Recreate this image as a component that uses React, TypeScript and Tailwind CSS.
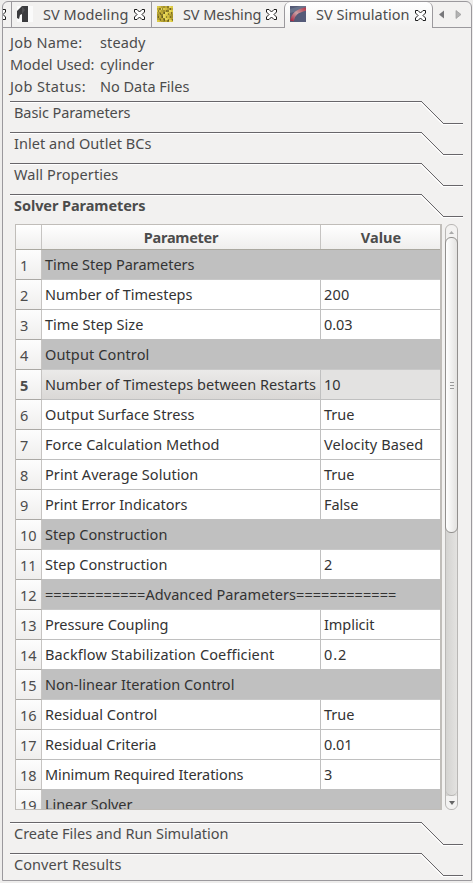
import { useLayoutEffect, useRef, useState } from "react";

type FitProps = { text: string; w: number; className?: string };

// Spreads the letters of a label over a fixed advance width.
function Fit({ text, w, className = "" }: FitProps) {
  const ref = useRef<HTMLSpanElement>(null);
  const [spacing, setSpacing] = useState(0);
  useLayoutEffect(() => {
    const el = ref.current;
    if (!el) return;
    el.style.letterSpacing = "0px";
    const next = (w - 0.6 - el.getBoundingClientRect().width) / text.length;
    el.style.letterSpacing = `${next}px`;
    setSpacing(next);
  }, [text, w]);
  return (
    <span ref={ref} className={`inline-block whitespace-pre ${className}`} style={{ letterSpacing: spacing }}>
      {text}
    </span>
  );
}

function CloseIcon() {
  return (
    <svg width="11" height="11" viewBox="0 0 11 11" className="shrink-0">
      <path
        d="M.5 .5H3L5.5 3L8 .5H10.5V3L8 5.5L10.5 8V10.5H8L5.5 8L3 10.5H.5V8L3 5.5L.5 3Z"
        fill="#fff"
        stroke="#1c1c1c"
      />
    </svg>
  );
}

function ModelIcon() {
  return (
    <svg width="16" height="16" viewBox="0 0 16 16" className="shrink-0">
      <rect width="16" height="16" fill="#fafafa" />
      <path d="M5 0H11V16H5V8L3 9L2 13L0 12V5Z" fill="#3b3b3e" />
      <path d="M5 0L8 4L5 8" fill="#505053" />
    </svg>
  );
}

function MeshIcon() {
  const cells = Array.from({ length: 64 }, (_, i) => i);
  const tones = ["#dccb45", "#a3912c", "#e8d75c", "#b6a334", "#8b7c28", "#d1bb3e", "#c0aa36"];
  return (
    <svg width="16" height="16" viewBox="0 0 16 16" className="shrink-0">
      <rect width="16" height="16" fill="#b9a638" />
      {cells.map((i) => (
        <rect key={i} x={(i % 8) * 2} y={Math.floor(i / 8) * 2} width="2" height="2" fill={tones[(i * 5 + (i >> 3) * (i >> 3)) % 7]} />
      ))}
      <path
        d="M1 5h1M5 3h1M9 5h1M13 3h1M3 8h1M7 7h1M11 8h1M14 7h1M1 11h1M5 11h1M9 11h1M13 11h1M3 14h1M7 14h1M11 14h1M15 14h1"
        stroke="#453f17"
        strokeWidth="1"
      />
    </svg>
  );
}

function SimulationIcon() {
  return (
    <svg width="16" height="16" viewBox="0 0 16 16" className="shrink-0">
      <defs>
        <linearGradient id="vessel" x1="0" y1="1" x2="1" y2="0">
          <stop offset="0" stopColor="#a82a44" />
          <stop offset=".5" stopColor="#c9a0a4" />
          <stop offset="1" stopColor="#b83c4e" />
        </linearGradient>
      </defs>
      <rect width="16" height="16" fill="#555a76" />
      <path d="M0 3L10 0H16V2L8 5L0 7Z" fill="#68738b" />
      <path d="M2 15C3 8 7 5 16 3" stroke="url(#vessel)" strokeWidth="3.5" fill="none" />
      <path d="M8 16V9L16 5V16Z" fill="#555b79" />
    </svg>
  );
}

function TabBar() {
  return (
    <div className="flex h-[26px] w-full text-[#4c4c4c]">
      <div className="flex h-[26px] w-[8px] items-center overflow-hidden border-b border-[#9b999d]">
        <div className="-ml-[8px] flex">
          <CloseIcon />
        </div>
      </div>
      <div className="flex h-[26px] w-[140px] items-center border-b border-l border-[#9b999d] pl-[5px]">
        <div className="-mt-[2px]"><ModelIcon /></div>
        <Fit text="SV Modeling" w={86} className="ml-[10px]" />
        <div className="ml-[6px]"><CloseIcon /></div>
      </div>
      <div className="flex h-[26px] w-[133px] items-center border-b border-l border-[#9b999d] pl-[5px]">
        <div className="-mt-[2px]"><MeshIcon /></div>
        <Fit text="SV Meshing" w={79} className="ml-[10px]" />
        <div className="ml-[5px]"><CloseIcon /></div>
      </div>
      <div className="flex h-[26px] w-[149px] items-center rounded-t-[6px] border-l border-r border-[#9b999d] bg-linear-to-b from-white to-[#f2f1f0] pl-[5px]">
        <div className="-mt-[2px]"><SimulationIcon /></div>
        <Fit text="SV Simulation" w={94} className="ml-[10px]" />
        <div className="ml-[6px]"><CloseIcon /></div>
      </div>
      <div className="h-[26px] grow border-b border-[#9b999d]">
        <svg width="38" height="25" viewBox="0 0 38 25">
          <path d="M11 8.5v8l-5-4z" fill="#77777a" />
          <path d="M23 8.5v8l5-4z" fill="#b2b2b2" stroke="#999" strokeWidth=".7" />
        </svg>
      </div>
    </div>
  );
}

type SectionProps = { title: string; w: number; bold?: boolean; className?: string };

function Section({ title, w, bold, className = "h-[31px]" }: SectionProps) {
  return (
    <div className={`relative ml-[7px] w-[453px] shrink-0 ${className}`}>
      <svg width="453" height="25" viewBox="0 0 453 25" className="absolute left-0 top-0" fill="none">
        <path d="M0 1.5H410.5L432.5 23.5H453" stroke="#fff" />
        <path d="M0 .5H411.5L433.5 22.5H453" stroke="#68666a" shapeRendering="crispEdges" />
      </svg>
      <div className={`relative pl-[4px] leading-[22px] text-[#4c4c4c] ${bold ? "font-bold" : ""}`}>
        <Fit text={title} w={w} />
      </div>
    </div>
  );
}

type Row = { name: string; w: number; value?: string; vw?: number; current?: boolean };

const rows: Row[] = [
  { name: "Time Step Parameters", w: 150 },
  { name: "Number of Timesteps", w: 148, value: "200", vw: 26 },
  { name: "Time Step Size", w: 99, value: "0.03", vw: 29 },
  { name: "Output Control", w: 105 },
  { name: "Number of Timesteps between Restarts", w: 271.5, value: "10", vw: 17, current: true },
  { name: "Output Surface Stress", w: 150, value: "True", vw: 31 },
  { name: "Force Calculation Method", w: 175, value: "Velocity Based", vw: 100 },
  { name: "Print Average Solution", w: 154, value: "True", vw: 31 },
  { name: "Print Error Indicators", w: 143, value: "False", vw: 35 },
  { name: "Step Construction", w: 123 },
  { name: "Step Construction", w: 123, value: "2", vw: 9 },
  { name: "============Advanced Parameters============", w: 352 },
  { name: "Pressure Coupling", w: 124, value: "Implicit", vw: 51 },
  { name: "Backflow Stabilization Coefficient", w: 230, value: "0.2", vw: 24 },
  { name: "Non-linear Iteration Control", w: 190 },
  { name: "Residual Control", w: 113, value: "True", vw: 31 },
  { name: "Residual Criteria", w: 112, value: "0.01", vw: 29 },
  { name: "Minimum Required Iterations", w: 199, value: "3", vw: 9 },
  { name: "Linear Solver", w: 88 },
];

function TableRow({ row, index }: { row: Row; index: number }) {
  const num = String(index + 1);
  return (
    <div className="flex h-[30px] shrink-0 leading-[28px] text-[#333]">
      <div
        className={`w-[26px] shrink-0 border-b border-r border-b-[#aaa8a4] border-r-[#c6c4c2] bg-linear-to-b from-[#fdfdfd] to-[#efeeed] pl-[4px] leading-[30px] text-[#4c4c4c] ${row.current ? "font-bold" : ""}`}
      >
        <Fit text={num} w={num.length * 8.5} />
      </div>
      {row.value === undefined ? (
        <div className="grow overflow-hidden border-b border-[#c8c8c8] bg-[#c0c0c0] pl-[3px]">
          <Fit text={row.name} w={row.w} />
        </div>
      ) : (
        <>
          <div
            className={`w-[279px] shrink-0 border-b border-r border-[#c0c0c0] pl-[3px] ${row.current ? "bg-linear-to-b from-[#ebeae9] to-[#dad8d6]" : "bg-white"}`}
          >
            <Fit text={row.name} w={row.w} />
          </div>
          <div className={`grow border-b border-[#c0c0c0] pl-[3px] ${row.current ? "bg-[#e3e2e1]" : "bg-white"}`}>
            <Fit text={row.value} w={row.vw ?? 0} />
          </div>
        </>
      )}
    </div>
  );
}

function ScrollBar() {
  return (
    <div className="ml-[3px] flex h-[586px] w-[13px] flex-col items-center rounded-[6px] border border-[#b9b7b5] bg-linear-to-r from-[#d4d3d1] to-[#e3e2e0]">
      <div className="-mb-[5px] flex h-[17px] w-full shrink-0 justify-center rounded-t-[6px] bg-[#f3f2f1] pt-[6px]">
        <svg width="5" height="3" viewBox="0 0 5 3"><path d="M0 3L2.5 0L5 3Z" fill="#aaa" /></svg>
      </div>
      <div className="z-10 flex h-[296px] w-[13px] shrink-0 flex-col items-center justify-center gap-[2px] rounded-[6px] border border-[#918f8d] bg-linear-to-r from-white to-[#e3e2e0]">
        <div className="h-px w-[4px] bg-[#999]" />
        <div className="h-px w-[4px] bg-[#999]" />
        <div className="h-px w-[4px] bg-[#999]" />
      </div>
      <div className="w-full grow rounded-b-[6px] border-b border-[#b9b7b5]" />
      <div className="flex h-[13px] w-full shrink-0 justify-center rounded-b-[6px] bg-[#f3f2f1] pt-[5px]">
        <svg width="6" height="4" viewBox="0 0 6 4"><path d="M0 0H6L3 4Z" fill="#666" /></svg>
      </div>
    </div>
  );
}

function ParameterTable() {
  return (
    <div className="flex h-[586px] w-[427px] shrink-0 flex-col overflow-hidden border border-r-2 border-[#c0bdb9]">
      <div className="flex h-[25px] shrink-0 border-b border-[#aaa8a0] bg-linear-to-b from-white to-[#efeeed] text-center font-bold leading-[24px] text-[#4c4c4c]">
        <div className="w-[26px] border-r border-[#c6c4c2]" />
        <div className="w-[279px] border-r border-[#c6c4c2]">
          <Fit text="Parameter" w={75} />
        </div>
        <div className="grow pl-px">
          <Fit text="Value" w={41} />
        </div>
      </div>
      {rows.map((row, i) => (
        <TableRow key={i} row={row} index={i} />
      ))}
    </div>
  );
}

const info = [
  { label: "Job Name:", lw: 73, value: "steady", vw: 46 },
  { label: "Model Used:", lw: 85, value: "cylinder", vw: 55 },
  { label: "Job Status:", lw: 76.5, value: "No Data Files", vw: 90 },
];

export default function App() {
  return (
    <div className="h-[883px] w-[473px] overflow-hidden bg-[#eeedec] pl-[2px] pt-[1px] font-['Noto_Sans','Open_Sans',sans-serif] text-[14.5px]">
      <div className="flex h-[880px] w-[470px] flex-col overflow-hidden rounded-t-[6px] border border-[#9b999d] bg-[#f2f1f0]">
        <TabBar />
        <div className="flex h-[73px] shrink-0 flex-col pl-[7px] pt-[3px] text-[#4c4c4c]">
          {info.map((item) => (
            <div key={item.label} className="flex h-[22px] leading-[22px]">
              <div className="w-[90px]">
                <Fit text={item.label} w={item.lw} />
              </div>
              <Fit text={item.value} w={item.vw} />
            </div>
          ))}
        </div>
        <Section title="Basic Parameters" w={117} />
        <Section title="Inlet and Outlet BCs" w={138} />
        <Section title="Wall Properties" w={105} />
        <Section title="Solver Parameters" w={132} bold className="h-[30px]" />
        <div className="mb-[12px] ml-[12px] flex shrink-0">
          <ParameterTable />
          <ScrollBar />
        </div>
        <Section title="Create Files and Run Simulation" w={215} />
        <Section title="Convert Results" w={108} className="h-[26px]" />
      </div>
    </div>
  );
}
